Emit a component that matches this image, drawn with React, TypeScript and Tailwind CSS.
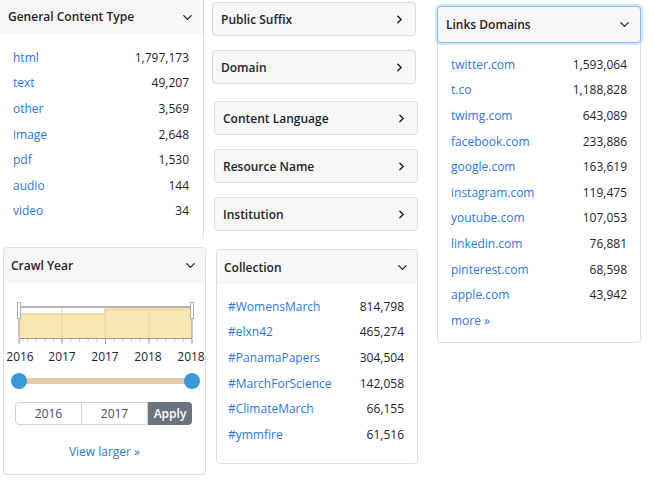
import { ChevronDown, ChevronRight } from "lucide-react";

const contentTypes = [
  ["html", "1,797,173"],
  ["text", "49,207"],
  ["other", "3,569"],
  ["image", "2,648"],
  ["pdf", "1,530"],
  ["audio", "144"],
  ["video", "34"],
];

const linkDomains = [
  ["twitter.com", "1,593,064"],
  ["t.co", "1,188,828"],
  ["twimg.com", "643,089"],
  ["facebook.com", "233,886"],
  ["google.com", "163,619"],
  ["instagram.com", "119,475"],
  ["youtube.com", "107,053"],
  ["linkedin.com", "76,881"],
  ["pinterest.com", "68,598"],
  ["apple.com", "43,942"],
];

const collections = [
  ["#WomensMarch", "814,798"],
  ["#elxn42", "465,274"],
  ["#PanamaPapers", "304,504"],
  ["#MarchForScience", "142,058"],
  ["#ClimateMarch", "66,155"],
  ["#ymmfire", "61,516"],
];

function Row({ label, value }: { label: string; value: string }) {
  return (
    <div className="flex h-[25.6px] items-center justify-between">
      <a className="text-[#2a78e4]">{label}</a>
      <span className="text-[#212529]">{value}</span>
    </div>
  );
}

function CollapsedCard({ title, className }: { title: string; className?: string }) {
  return (
    <div
      className={`flex h-[34px] w-[204px] items-center justify-between rounded border border-[#dedede] bg-[#f7f7f7] pl-[8px] pr-[9px] pt-px font-semibold text-[#212529] ${className ?? ""}`}
    >
      <span>{title}</span>
      <ChevronRight size={13} strokeWidth={2.8} />
    </div>
  );
}

function YearChart() {
  const minor = Array.from({ length: 21 }, (_, i) => 19 + i * 8.65);
  const labels = [
    [20, "2016"],
    [62, "2017"],
    [105, "2017"],
    [148, "2018"],
    [191, "2018"],
  ] as const;
  return (
    <svg width="201" height="64" className="mt-[18px] block">
      <g transform="translate(-4,-300)">
        <path d="M19 337 V313 H105 V308 H192 V337 Z" fill="#f8e6b3" />
        <path d="M19 313 H105 V308 H192" fill="none" stroke="#e8c56a" strokeWidth="1" />
        {[62, 105, 149].map((x) => (
          <line key={x} x1={x} x2={x} y1={306} y2={337} stroke="#e4d6b2" strokeWidth="1" />
        ))}
        <rect x="19" y="305" width="173" height="2" fill="#b5b5b5" />
        <line x1="19" x2="19" y1="306" y2="337" stroke="#9a9a9a" />
        <line x1="192" x2="192" y1="306" y2="337" stroke="#9a9a9a" />
        <line x1="19" x2="192" y1="337.5" y2="337.5" stroke="#9a9a9a" />
        {minor.map((x) => (
          <line key={x} x1={x} x2={x} y1={338} y2={341} stroke="#cfcfcf" />
        ))}
        {[19, 62, 105.5, 149, 192].map((x) => (
          <line key={x} x1={x} x2={x} y1={338} y2={343} stroke="#a0a0a0" />
        ))}
        <rect x="17.5" y="301.5" width="3" height="16" fill="#fff" stroke="#b0b0b0" />
        <rect x="190.5" y="301.5" width="3" height="16" fill="#fff" stroke="#b0b0b0" />
        {labels.map(([x, t], i) => (
          <text
            key={i}
            x={x}
            y={360}
            textAnchor="middle"
            fontSize="12"
            fill="#212529"
            fontFamily="'Open Sans', sans-serif"
          >
            {t}
          </text>
        ))}
      </g>
    </svg>
  );
}

export default function App() {
  return (
    <div className="flex h-[496px] w-[654px] overflow-hidden bg-white font-['Open_Sans',sans-serif] text-[12px] text-[#212529]">
      {/* left column */}
      <div className="flex w-[205px] shrink-0 flex-col">
        <div className="h-[237px] w-[204px] border-r border-[#dedede]">
          <div className="flex h-[34px] items-center justify-between bg-[#f7f7f7] pl-[8px] pr-[8px] font-semibold">
            <span>General Content Type</span>
            <ChevronDown size={15} strokeWidth={2} />
          </div>
          <div className="pl-[13px] pr-[14px] pt-[11px]">
            {contentTypes.map(([l, v]) => (
              <Row key={l} label={l} value={v} />
            ))}
          </div>
        </div>

        <div className="ml-[3px] mt-[10px] h-[228px] w-[203px] overflow-hidden rounded border border-[#dedede]">
          <div className="flex h-[35px] items-center justify-between bg-[#f7f7f7] pl-[7px] pr-[7px] font-semibold">
            <span>Crawl Year</span>
            <ChevronDown size={15} strokeWidth={2} />
          </div>
          <YearChart />
          <div className="relative ml-[7px] mt-[8px] h-[16px] w-[189px]">
            <div className="absolute left-[8px] right-[8px] top-[5px] h-[6px] bg-[#e6cca6]" />
            <div className="absolute left-0 top-0 h-[16px] w-[16px] rounded-full bg-[#3a9ad9]" />
            <div className="absolute right-0 top-0 h-[16px] w-[16px] rounded-full bg-[#3a9ad9]" />
          </div>
          <div className="ml-[11px] mt-[13px] flex h-[23px] w-[177px]">
            <div className="flex w-[67px] items-center justify-center rounded-l border border-[#ced4da] text-[#495057]">
              2016
            </div>
            <div className="-ml-px flex w-[67px] items-center justify-center border border-[#ced4da] text-[#495057]">
              2017
            </div>
            <div className="flex w-[44px] items-center justify-center rounded-r bg-[#6c757d] font-semibold text-white">
              Apply
            </div>
          </div>
          <div className="mt-[18px] text-center text-[#2a78e4]">View larger »</div>
        </div>
      </div>

      {/* middle column */}
      <div className="ml-[7px] flex w-[206px] shrink-0 flex-col">
        <CollapsedCard title="Public Suffix" className="mt-[2px]" />
        <CollapsedCard title="Domain" className="mt-[14px]" />
        <CollapsedCard title="Content Language" className="ml-[2px] mt-[17px]" />
        <CollapsedCard title="Resource Name" className="ml-[2px] mt-[14px]" />
        <CollapsedCard title="Institution" className="ml-[2px] mt-[14px]" />

        <div className="ml-[4px] mt-[18px] h-[215px] w-[202px] overflow-hidden rounded border border-[#dedede]">
          <div className="flex h-[34px] items-center justify-between bg-[#f7f7f7] pl-[7px] pr-[7px] pt-px font-semibold">
            <span>Collection</span>
            <ChevronDown size={15} strokeWidth={2} />
          </div>
          <div className="pl-[11px] pr-[13px] pt-[10px]">
            {collections.map(([l, v]) => (
              <Row key={l} label={l} value={v} />
            ))}
          </div>
        </div>
      </div>

      {/* right column */}
      <div className="ml-[19px] flex w-[205px] shrink-0 flex-col">
        <div className="mt-[6px] h-[337px] w-[204px] rounded border border-[#dedede]">
          <div className="-m-px flex h-[37px] items-center justify-between rounded border border-[#8dbdf5] bg-[#f7f7f7] pl-[8px] pr-[8px] font-semibold shadow-[0_0_0_2px_rgba(13,110,253,0.18)]">
            <span>Links Domains</span>
            <ChevronDown size={15} strokeWidth={2} />
          </div>
          <div className="pl-[13px] pr-[13px] pt-[10px]">
            {linkDomains.map(([l, v]) => (
              <Row key={l} label={l} value={v} />
            ))}
            <div className="flex h-[25.6px] items-center text-[#2a78e4]">more »</div>
          </div>
        </div>
      </div>
    </div>
  );
}
